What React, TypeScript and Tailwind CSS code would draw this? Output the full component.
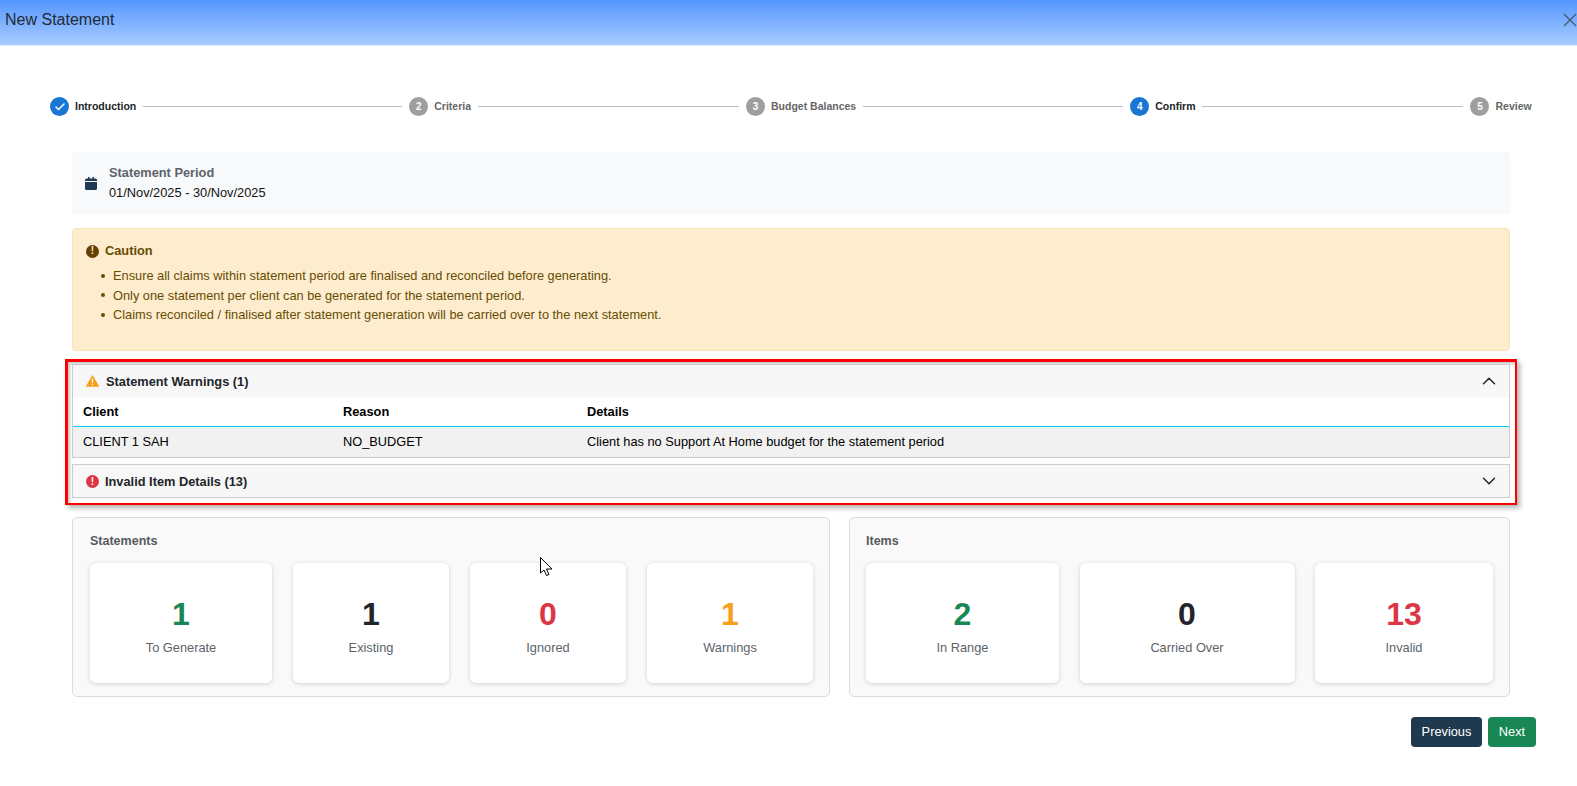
import { Check, ChevronDown, ChevronUp } from 'lucide-react';

const steps = [
  { label: 'Introduction', state: 'done', line: 'w-[259px]' },
  { label: 'Criteria', state: 'idle', line: 'w-[261px]' },
  { label: 'Budget Balances', state: 'idle', line: 'w-[260px]' },
  { label: 'Confirm', state: 'active', line: 'w-[261px]' },
  { label: 'Review', state: 'idle', line: '' },
];

const cautions = [
  'Ensure all claims within statement period are finalised and reconciled before generating.',
  'Only one statement per client can be generated for the statement period.',
  'Claims reconciled / finalised after statement generation will be carried over to the next statement.',
];

const statements = [
  { value: '1', label: 'To Generate', color: 'text-[#198754]' },
  { value: '1', label: 'Existing', color: 'text-[#212529]' },
  { value: '0', label: 'Ignored', color: 'text-[#dc3545]' },
  { value: '1', label: 'Warnings', color: 'text-[#f9a01b]' },
];

const items = [
  { value: '2', label: 'In Range', color: 'text-[#198754]' },
  { value: '0', label: 'Carried Over', color: 'text-[#212529]' },
  { value: '13', label: 'Invalid', color: 'text-[#dc3545]' },
];

function StatCard({ value, label, color }: { value: string; label: string; color: string }) {
  return (
    <div className="flex h-[120px] flex-col items-center rounded-md bg-white pt-[31px] shadow-[0_1px_4px_rgba(0,0,0,0.16)]">
      <div className={`text-[32px] leading-[40px] font-bold ${color}`}>{value}</div>
      <div className="mt-[6px] text-[12.8px] leading-[16px] text-[#5c636a]">{label}</div>
    </div>
  );
}

export default function App() {
  return (
    <div className="relative h-[786px] w-[1577px] overflow-hidden bg-white font-['Liberation_Sans',Arial,sans-serif] text-[#212529]">
      <header className="flex h-[46px] items-center justify-between border-b border-[#e6effc] bg-gradient-to-b from-[#5496ff] to-[#a7cbff] pb-[5px] pl-[5px]">
        <h1 className="text-[16px] text-[#212a36]">New Statement</h1>
        <svg width="14" height="14" viewBox="0 0 14 14" className="shrink-0 text-[#4a5a70]" aria-hidden="true">
          <path d="M1 1 L13 13 M13 1 L1 13" stroke="currentColor" strokeWidth="1.4" fill="none" />
        </svg>
      </header>

      <nav className="mt-[51px] ml-[50px] flex h-[19px] items-center">
        {steps.map((step, i) => (
          <div key={step.label} className="flex items-center">
            <span
              className={`flex h-[19px] w-[19px] items-center justify-center rounded-full text-[10px] font-bold text-white ${
                step.state === 'idle' ? 'bg-[#9e9e9e]' : 'bg-[#1976d2]'
              }`}
            >
              {step.state === 'done' ? <Check className="h-[12px] w-[12px]" strokeWidth={3} /> : i + 1}
            </span>
            <span
              className={`ml-[6px] pt-px text-[10.5px] font-bold ${
                step.state === 'idle' ? 'text-[#666666]' : 'text-[#212529]'
              }`}
            >
              {step.label}
            </span>
            {step.line && <span className={`mx-[7px] h-px bg-[#bdbdbd] ${step.line}`} />}
          </div>
        ))}
      </nav>

      <main className="mx-[72px] mt-[36px] w-[1438px]">
        <section className="flex h-[62px] items-center rounded-[4px] bg-[#f8f9fa] pl-[13px]">
          <svg width="12" height="13" viewBox="0 0 12 13" className="mt-px text-[#1f3a52]" aria-hidden="true">
            <path
              fill="currentColor"
              d="M3 0h1.5v1.5h3V0H9v1.5h1.5A1.5 1.5 0 0 1 12 3v1H0V3a1.5 1.5 0 0 1 1.5-1.5H3zM0 5h12v6.5a1.5 1.5 0 0 1-1.5 1.5h-9A1.5 1.5 0 0 1 0 11.5z"
            />
          </svg>
          <div className="ml-[12px]">
            <div className="text-[12.8px] leading-[18px] font-bold text-[#5c636a]">Statement Period</div>
            <div className="mt-[2px] text-[12.8px] leading-[18px] text-[#111111]">01/Nov/2025 - 30/Nov/2025</div>
          </div>
        </section>

        <section className="mt-[14px] h-[123px] rounded-[4px] border border-[#fde2b3] bg-[#feeccf] pt-[13px] pl-[13px] text-[#664d03]">
          <div className="flex items-center gap-[6px] text-[12.8px] leading-[18px] font-bold">
            <span className="flex h-[13px] w-[13px] items-center justify-center rounded-full bg-[#664000] text-[10px] font-bold text-[#feeccf]">!</span>
            Caution
          </div>
          <ul className="mt-[6px] pl-[15px] text-[12.8px] leading-[19.5px]">
            {cautions.map((text) => (
              <li key={text} className="flex items-center gap-[8px]">
                <span className="h-[4px] w-[4px] rounded-full bg-[#664d03]" />
                {text}
              </li>
            ))}
          </ul>
        </section>

        <section className="mx-[-7px] mt-[8px] h-[146px] border-2 border-t-[3px] border-l-[3px] border-[#ff0000] pt-[2px] pr-[5px] pl-[4px] shadow-[3px_3px_5px_rgba(0,0,0,0.3),inset_2px_2px_3px_rgba(0,0,0,0.22)]">
          <div className="border border-[#cccccc] bg-white">
            <div className="flex h-[32px] items-center bg-[#f7f7f7] pr-[9px] pl-[13px] text-[12.8px] font-bold text-[#212529]">
              <svg width="13" height="12" viewBox="0 0 13 12" aria-hidden="true">
                <path d="M6.5 0.4 L12.9 11.6 H0.1 Z" fill="#f9a01b" stroke="#f9a01b" strokeWidth="0.6" strokeLinejoin="round" />
                <path d="M5.8 3.8 H7.2 L7 8 H6 Z" fill="white" />
                <rect x="5.9" y="8.8" width="1.2" height="1.3" fill="white" />
              </svg>
              <span className="ml-[7px] pt-[2px]">Statement Warnings (1)</span>
              <ChevronUp className="ml-auto h-[22px] w-[22px]" strokeWidth={1.6} />
            </div>
            <table className="w-full table-fixed border-separate border-spacing-0 text-left text-[12.8px] text-black">
              <thead>
                <tr className="h-[30px]">
                  <th className="w-[270px] border-b border-[#00d0f5] pl-[10px] font-bold">Client</th>
                  <th className="w-[244px] border-b border-[#00d0f5] font-bold">Reason</th>
                  <th className="border-b border-[#00d0f5] font-bold">Details</th>
                </tr>
              </thead>
              <tbody>
                <tr className="h-[30px] bg-[#f1f1f1]">
                  <td className="pl-[10px]">CLIENT 1 SAH</td>
                  <td>NO_BUDGET</td>
                  <td>Client has no Support At Home budget for the statement period</td>
                </tr>
              </tbody>
            </table>
          </div>
          <div className="mt-[6px] flex h-[34px] items-center border border-[#cccccc] bg-[#f7f7f7] pr-[9px] pl-[13px] text-[12.8px] font-bold text-[#212529]">
            <span className="flex h-[13px] w-[13px] items-center justify-center rounded-full bg-[#dc3545] text-[10px] font-bold text-white">!</span>
            <span className="ml-[6px] pt-[2px]">Invalid Item Details (13)</span>
            <ChevronDown className="ml-auto h-[22px] w-[22px]" strokeWidth={1.6} />
          </div>
        </section>

        <div className="mt-[12px] flex gap-[19px]">
          <section className="h-[180px] w-[758px] rounded-[5px] border border-[#dcdcdc] bg-[#f9f9f9] pt-[15px] pr-[16px] pl-[17px]">
            <h2 className="text-[12.5px] leading-[16px] font-bold text-[#555b61]">Statements</h2>
            <div className="mt-[14px] grid grid-cols-[182px_156px_156px_166px] justify-between">
              {statements.map((s) => (
                <StatCard key={s.label} {...s} />
              ))}
            </div>
          </section>
          <section className="h-[180px] w-[661px] rounded-[5px] border border-[#dcdcdc] bg-[#f9f9f9] pt-[15px] pr-[16px] pl-[16px]">
            <h2 className="text-[12.5px] leading-[16px] font-bold text-[#555b61]">Items</h2>
            <div className="mt-[14px] grid grid-cols-[193px_215px_178px] justify-between">
              {items.map((s) => (
                <StatCard key={s.label} {...s} />
              ))}
            </div>
          </section>
        </div>
      </main>

      <div className="mt-[20px] mr-[41px] flex justify-end gap-[6px]">
        <button type="button" className="h-[30px] w-[71px] rounded-[4px] bg-[#1f3a4f] text-[12.8px] text-white">Previous</button>
        <button type="button" className="h-[30px] w-[48px] rounded-[4px] bg-[#198754] text-[12.8px] text-white">Next</button>
      </div>

      {/* mouse pointer caught in the screenshot */}
      <svg width="14" height="20" viewBox="0 0 14 20" className="absolute top-[557px] left-[540px]" aria-hidden="true">
        <path d="M0.5 0.5 L0.5 16 L4 13 L6.5 18.5 L9 17.5 L6.5 12 L12 12 Z" fill="white" stroke="black" strokeWidth="1" />
      </svg>
    </div>
  );
}
